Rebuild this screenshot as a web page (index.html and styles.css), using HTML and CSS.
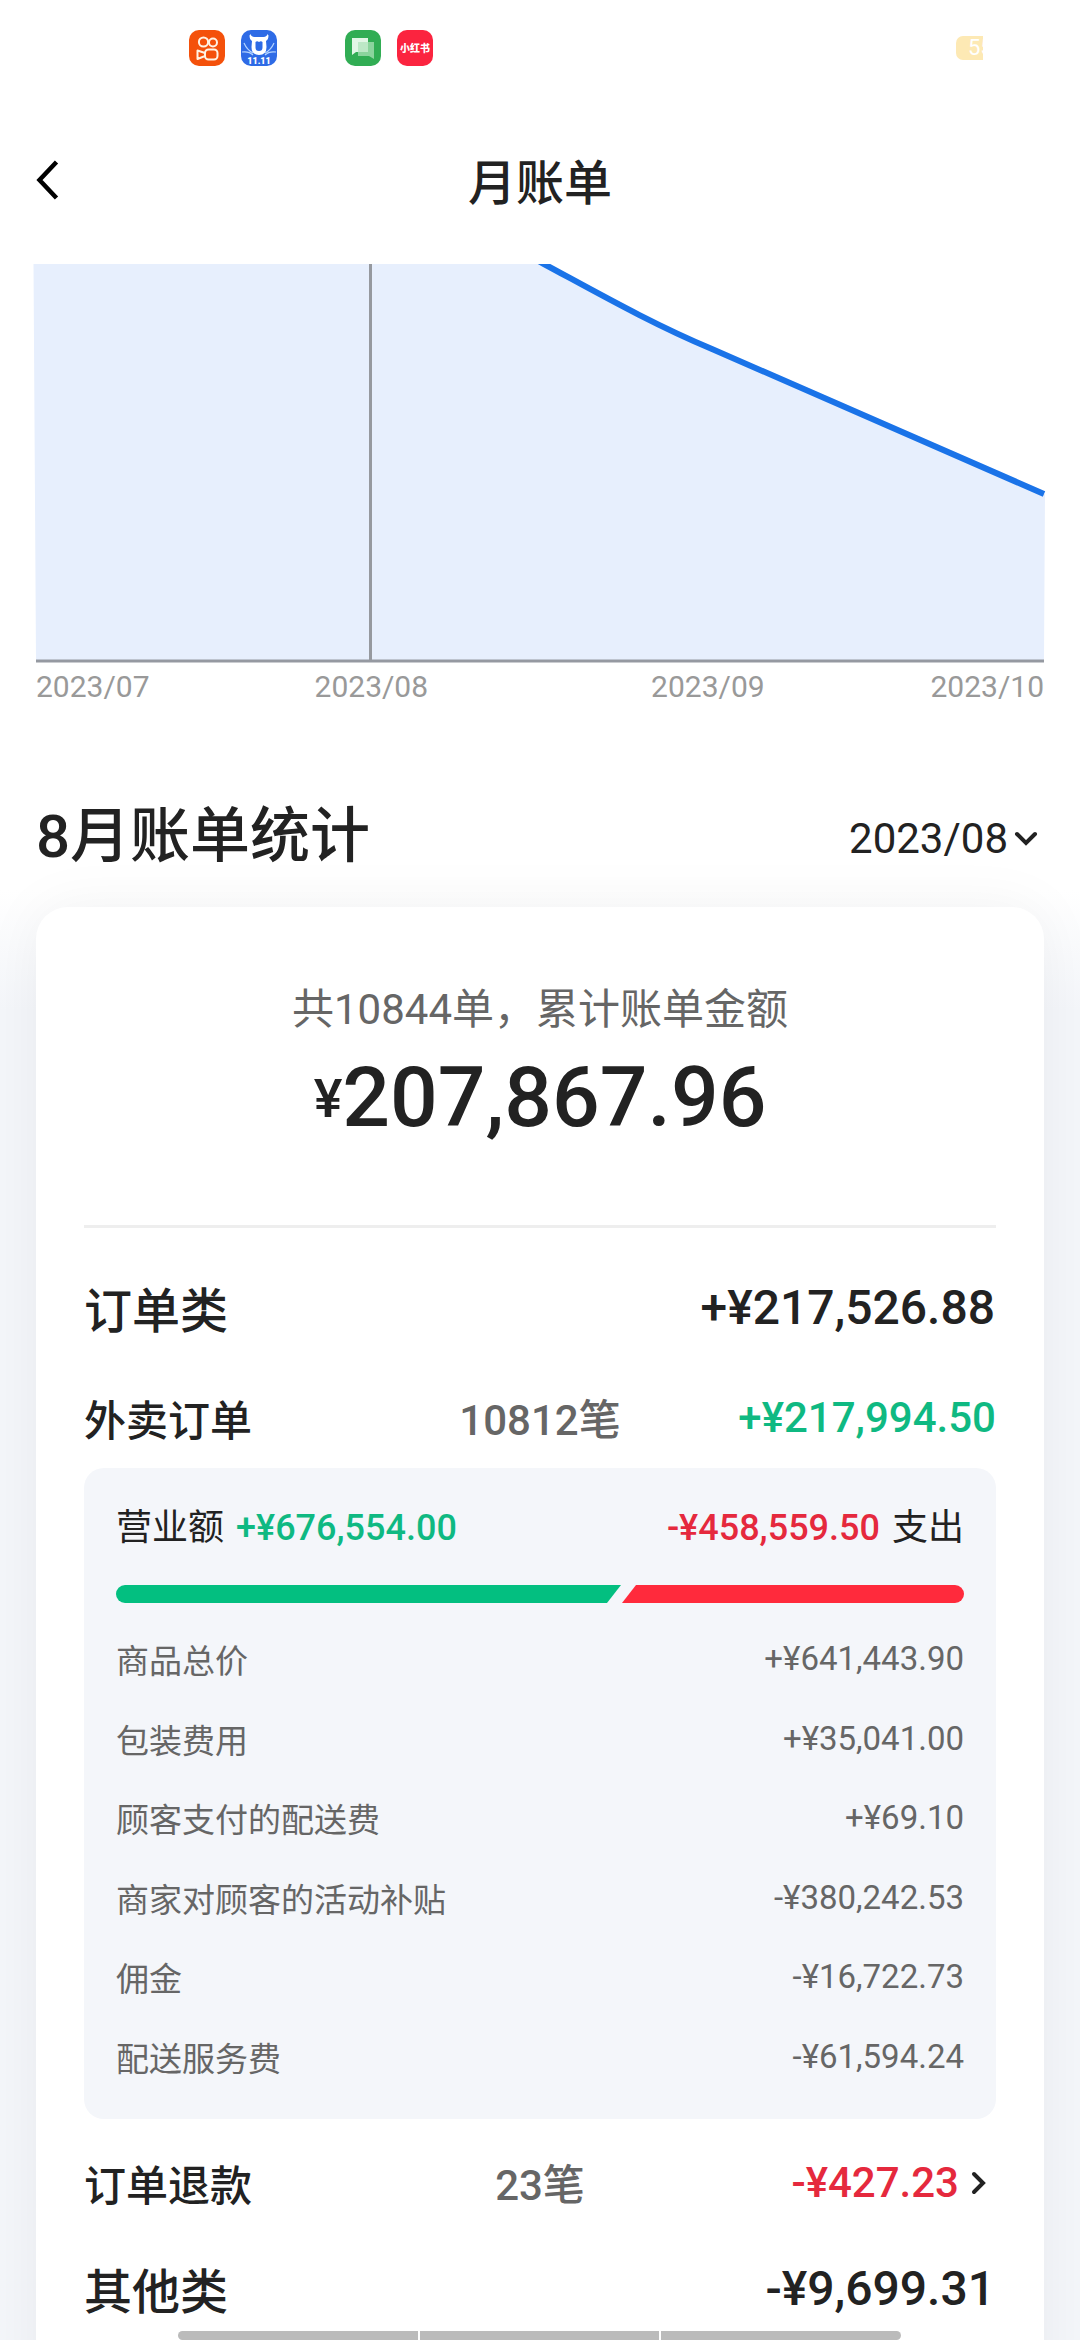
FILE: index.html
```html
<!DOCTYPE html>
<html lang="zh-CN">
<head>
<meta charset="utf-8">
<title>月账单</title>
<link rel="stylesheet" href="styles.css">
</head>
<body>
<div class="status">
  <div class="apps">
    <svg class="app" viewBox="0 0 36 36"><rect width="36" height="36" rx="10" fill="#f4510b"/><g fill="none" stroke="#fff3e4" stroke-width="2"><circle cx="14.5" cy="12" r="4.6"/><circle cx="24" cy="12.5" r="4"/><rect x="16" y="19.5" width="12.5" height="10" rx="3.5"/><path d="M16 23l-7.500-2.500v8.500l7.500-3z" stroke-linejoin="round"/></g></svg>
    <svg class="app" viewBox="0 0 36 36"><rect width="36" height="36" rx="10" fill="#2e6be6"/><path d="M1 22q7-1 11 3M35 22q-7-1-11 3M3 13q3 7 9 10M33 13q-3 7-9 10" stroke="#b4d4ff" stroke-width="1.200" fill="none"/><path d="M9.500 4q.5 2.500 4 3h9q3.500-.5 4-3l1 1.500q0 4-2.500 5.500l.5 6q0 8-7.500 8t-7.500-8l.5-6q-2.500-1.500-2.500-5.500z" fill="#fff"/><path d="M14.500 12q1.500-1.500 3.500 0 2-1.500 3.500 0v5.500q0 3.500-3.500 3.500t-3.500-3.500z" fill="#2e6be6"/><text x="18" y="34" class="sale">11.11</text></svg>
    <svg class="app app-chat" viewBox="0 0 36 36"><rect width="36" height="36" rx="10" fill="#31ad54"/><path d="M13 12h16v17l-5-3h-11z" fill="#8bd49d"/><path d="M7 8h16v14h-12l-4 3z" fill="#e2f6e6"/><path d="M13 12h10v10h-10z" fill="#bce8c6"/></svg>
    <svg class="app" viewBox="0 0 36 36"><rect width="36" height="36" rx="10" fill="#fb243f"/><text x="18" y="21.500" class="red-name">小红书</text></svg>
  </div>
  <div class="battery">55</div>
</div>
<header class="nav">
  <svg class="back" viewBox="0 0 24 40"><path d="M20.500 2L3.500 20l17 18" fill="none" stroke="#000" stroke-width="4.500"/></svg>
  <h1>月账单</h1>
</header>
<svg class="chart" viewBox="0 264 1080 399">
  <path d="M33.500 264H544C596 292 652 324 712 349L1045 494L1044 660H36z" fill="#e7effd"/>
  <path d="M370.500 264V660" stroke="#96999f" stroke-width="3"/>
  <path d="M524 253L544 264C596 292 652 324 712 349L1044 494" fill="none" stroke="#1a73e8" stroke-width="6"/>
  <path d="M36 661H1044" stroke="#9599a1" stroke-width="3"/>
</svg>
<div class="axis"><span>2023/07</span><span class="m8">2023/08</span><span class="m9">2023/09</span><span class="m10">2023/10</span></div>
<div class="section-head">
  <h2>8月账单统计</h2>
  <div class="month">2023/08<svg class="down" viewBox="0 0 24 16"><path d="M3 3l9 9 9-9" fill="none" stroke="#222" stroke-width="4" stroke-linecap="round"/></svg></div>
</div>
<main class="card">
  <div class="summary">共10844单，累计账单金额</div>
  <div class="total"><span class="yen">¥</span>207,867.96</div>
  <div class="category first"><span class="name">订单类</span><span class="sum">+¥217,526.88</span></div>
  <div class="item orders"><span class="name">外卖订单</span><span class="count">10812笔</span><span class="money green">+¥217,994.50</span></div>
  <section class="panel">
    <div class="flow">
      <div class="side"><span>营业额</span><b class="green">+¥676,554.00</b></div>
      <div class="side"><b class="red">-¥458,559.50</b><span>支出</span></div>
    </div>
    <div class="ratio"><i class="in"></i><i class="out"></i></div>
    <div class="detail"><span class="name">商品总价</span><span>+¥641,443.90</span></div>
    <div class="detail"><span class="name">包装费用</span><span>+¥35,041.00</span></div>
    <div class="detail"><span class="name">顾客支付的配送费</span><span>+¥69.10</span></div>
    <div class="detail"><span class="name">商家对顾客的活动补贴</span><span>-¥380,242.53</span></div>
    <div class="detail"><span class="name">佣金</span><span>-¥16,722.73</span></div>
    <div class="detail"><span class="name">配送服务费</span><span>-¥61,594.24</span></div>
  </section>
  <div class="item refund"><span class="name">订单退款</span><span class="count">23笔</span><span class="money red">-¥427.23<svg class="next" viewBox="0 0 16 24"><path d="M3 3l9 9-9 9" fill="none" stroke="#222" stroke-width="4" stroke-linecap="round"/></svg></span></div>
  <div class="category"><span class="name">其他类</span><span class="sum">-¥9,699.31</span></div>
</main>
<div class="dock"><i></i><i></i><i></i></div>
</body>
</html>
```
FILE: styles.css
```css
* { box-sizing: border-box; }
html { height: 2340px; overflow: hidden; }
body {
  margin: 0;
  width: 1080px;
  height: 2340px;
  overflow: hidden;
  position: relative;
  display: flex;
  flex-direction: column;
  font-family: Roboto, "Noto Sans CJK SC", sans-serif;
  color: #222;
  background: linear-gradient(#fff 890px, #f4f6fa 1010px);
}
body > * { flex-shrink: 0; }
h1, h2 { margin: 0; font-weight: 500; }

.status { height: 96px; padding: 30px 97px 0 189px; display: flex; justify-content: space-between; }
.apps { display: flex; gap: 16px; }
.app { width: 36px; height: 36px; }
.app-chat { margin-left: 52px; }
.sale { font: 900 9px Roboto, sans-serif; fill: #fff; text-anchor: middle; }
.red-name { font: 900 10px "Noto Sans CJK SC", sans-serif; fill: #fff; text-anchor: middle; }
.battery {
  width: 27px; height: 24px; margin-top: 6px; padding-left: 12px;
  overflow: hidden; white-space: nowrap;
  border-radius: 7px 0 0 7px; background: #fde9b4;
  color: #fff; font-size: 22px; line-height: 24px;
}

.nav { height: 168px; padding: 0 36px; display: grid; grid-template-columns: 1fr auto 1fr; }
.back { width: 24px; height: 40px; margin-top: 64px; }
.nav h1 { font-size: 48px; line-height: 60px; margin-top: 58px; }

.chart { display: block; width: 1080px; height: 399px; }
.axis { height: 48px; padding: 0 36px; display: flex; font-size: 30px; line-height: 48px; color: #999; }
.m8 { margin-left: 165px; }
.m9 { margin-left: 223px; }
.m10 { margin-left: auto; }

.section-head { height: 196px; padding: 96px 42px 0 36px; display: flex; justify-content: space-between; }
.section-head h2 { font-size: 60px; line-height: 60px; }
.month { display: flex; align-items: center; height: 60px; margin-top: 2px; font-size: 42px; line-height: 60px; }
.down { width: 24px; height: 16px; margin-left: 6px; }

.card {
  flex: 1 0 1500px;
  margin: 0 36px;
  padding: 73px 48px 0;
  border-radius: 32px 32px 0 0;
  background: #fff;
  box-shadow: 0 0 60px rgba(0, 0, 0, .05);
}
.summary { font-size: 42px; line-height: 60px; color: #666; text-align: center; }
.total {
  height: 180px; margin-top: 8px;
  border-bottom: 3px solid #eee;
  font-size: 84px; font-weight: 500; line-height: 100px; text-align: center;
}
.yen { font-size: 54px; position: relative; top: -9px; }
.category { height: 80px; margin-top: 36px; display: flex; justify-content: space-between; font-size: 48px; line-height: 80px; font-weight: 500; }
.category.first { margin-top: 40px; }
.sum { padding-right: 1px; }
.name { padding-top: 4px; }
.item { height: 60px; display: grid; grid-template-columns: 1fr auto 1fr; font-size: 42px; line-height: 60px; font-weight: 500; }
.orders { margin-top: 40px; }
.refund { margin-top: 34px; }
.count { color: #666; padding-top: 3px; }
.money { height: 59px; line-height: 59px; display: flex; justify-content: flex-end; align-items: center; }
.green { color: #0fb982; }
.red { color: #e5293d; }
.next { width: 16px; height: 24px; margin: 0 9px 0 12px; }

.panel { height: 651px; margin-top: 20px; padding: 34px 32px 0; border-radius: 20px; background: #f4f6fa; }
.flow { padding-top: 1px; display: flex; justify-content: space-between; font-size: 36px; line-height: 50px; }
.flow b { font-weight: 500; }
.side { display: flex; gap: 12px; }
.ratio { height: 18px; margin: 32px 0 16px; display: flex; }
.in { width: 505px; background: #03bf80; border-radius: 9px 0 0 9px; clip-path: polygon(0 0, 100% 0, calc(100% - 14px) 100%, 0 100%); }
.out { flex: 1; background: #ff2a3c; border-radius: 0 9px 9px 0; clip-path: polygon(15px 0, 100% 0, 100% 100%, 1px 100%); }
.detail { height: 79.500px; display: flex; justify-content: space-between; font-size: 33px; line-height: 79.500px; color: #666; }
.detail .name { padding-top: 3px; }

.dock { position: absolute; left: 178px; bottom: 0; width: 723px; height: 9px; display: flex; gap: 2px; border-radius: 5px; overflow: hidden; }
.dock i { background: #bbb; flex: 1; }
```
